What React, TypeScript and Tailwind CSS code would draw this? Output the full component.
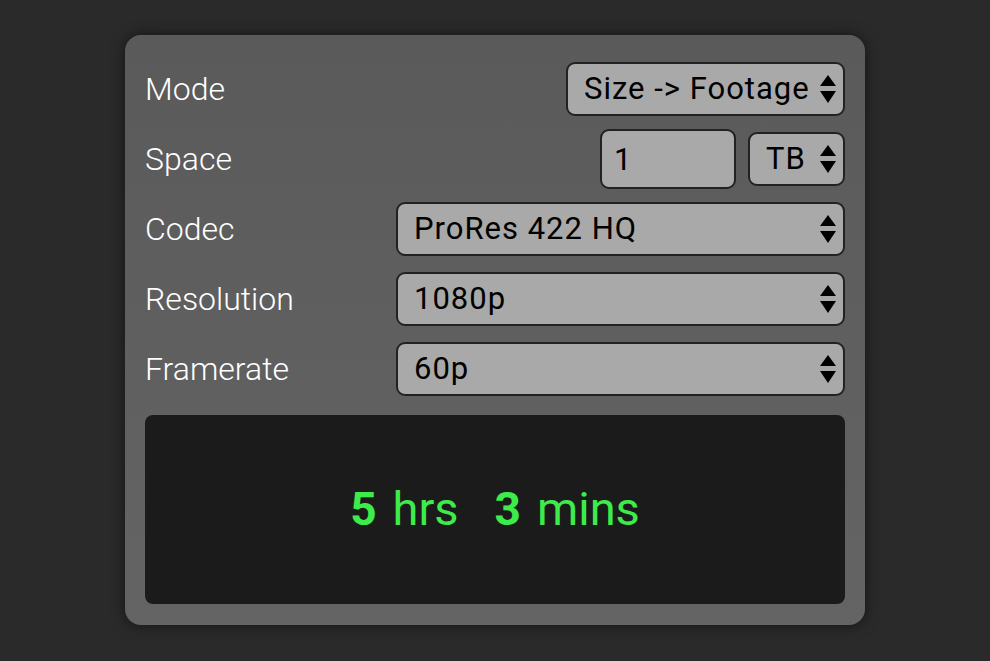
import React, { useState } from "react";

const Arrows = () => (
  <svg
    width="16"
    height="28"
    viewBox="0 0 16 28"
    className="pointer-events-none absolute right-[9px] top-1/2 -translate-y-1/2"
  >
    <polygon points="8,0 16,11 0,11" fill="#000" />
    <polygon points="0,16 16,16 8,28" fill="#000" />
  </svg>
);

type SelectProps = {
  value: string;
  options: string[];
  onChange: (v: string) => void;
  className?: string;
};

const Select = ({ value, options, onChange, className = "" }: SelectProps) => (
  <div className={`relative h-[54px] ${className}`}>
    <select
      value={value}
      onChange={(e) => onChange(e.target.value)}
      className="h-full w-full appearance-none rounded-[9px] border-2 border-[#222] bg-[#a9a9a9] pl-4 pr-7 text-[31px] tracking-[1px] text-black outline-none"
    >
      {options.map((o) => (
        <option key={o} value={o}>
          {o}
        </option>
      ))}
    </select>
    <Arrows />
  </div>
);

const Row = ({ label, children }: { label: string; children: React.ReactNode }) => (
  <div className="flex h-[70px] items-center">
    <span className="w-[251px] shrink-0 text-[32px] font-light text-white">{label}</span>
    <div className="flex flex-1 items-center justify-end gap-3">{children}</div>
  </div>
);

export default function App() {
  const [mode, setMode] = useState("Size -> Footage");
  const [space, setSpace] = useState("1");
  const [unit, setUnit] = useState("TB");
  const [codec, setCodec] = useState("ProRes 422 HQ");
  const [res, setRes] = useState("1080p");
  const [fps, setFps] = useState("60p");

  return (
    <div
      className="flex min-h-screen justify-center bg-[#2a2a2a] pt-[35px]"
      style={{ fontFamily: "Roboto, 'Liberation Sans', sans-serif" }}
    >
      <div className="h-[590px] w-[740px] rounded-[16px] bg-gradient-to-b from-[#5a5a5a] to-[#646464] p-5 pt-[19px] shadow-[0_0_14px_rgba(0,0,0,0.55)]">
        <Row label="Mode">
          <Select
            value={mode}
            onChange={setMode}
            options={["Size -> Footage", "Footage -> Size"]}
            className="w-[279px]"
          />
        </Row>
        <Row label="Space">
          <input
            value={space}
            onChange={(e) => setSpace(e.target.value)}
            className="h-[60px] w-[136px] rounded-[9px] border-2 border-[#222] bg-[#a9a9a9] px-3 text-[31px] text-black outline-none"
          />
          <Select
            value={unit}
            onChange={setUnit}
            options={["GB", "TB"]}
            className="w-[97px]"
          />
        </Row>
        <Row label="Codec">
          <Select
            value={codec}
            onChange={setCodec}
            options={["ProRes 422 HQ", "ProRes 422", "ProRes 4444"]}
            className="w-full"
          />
        </Row>
        <Row label="Resolution">
          <Select
            value={res}
            onChange={setRes}
            options={["720p", "1080p", "4K"]}
            className="w-full"
          />
        </Row>
        <Row label="Framerate">
          <Select
            value={fps}
            onChange={setFps}
            options={["24p", "30p", "60p"]}
            className="w-full"
          />
        </Row>

        {/* result */}
        <div className="mt-[11px] flex h-[189px] items-center justify-center rounded-[8px] bg-[#1b1b1b] text-[#3dec4a]">
          <div className="flex items-baseline">
            <span className="text-[46px] font-bold">5</span>
            <span className="ml-4 text-[47px]">hrs</span>
            <span className="ml-9 text-[46px] font-bold">3</span>
            <span className="ml-4 text-[47px]">mins</span>
          </div>
        </div>
      </div>
    </div>
  );
}
